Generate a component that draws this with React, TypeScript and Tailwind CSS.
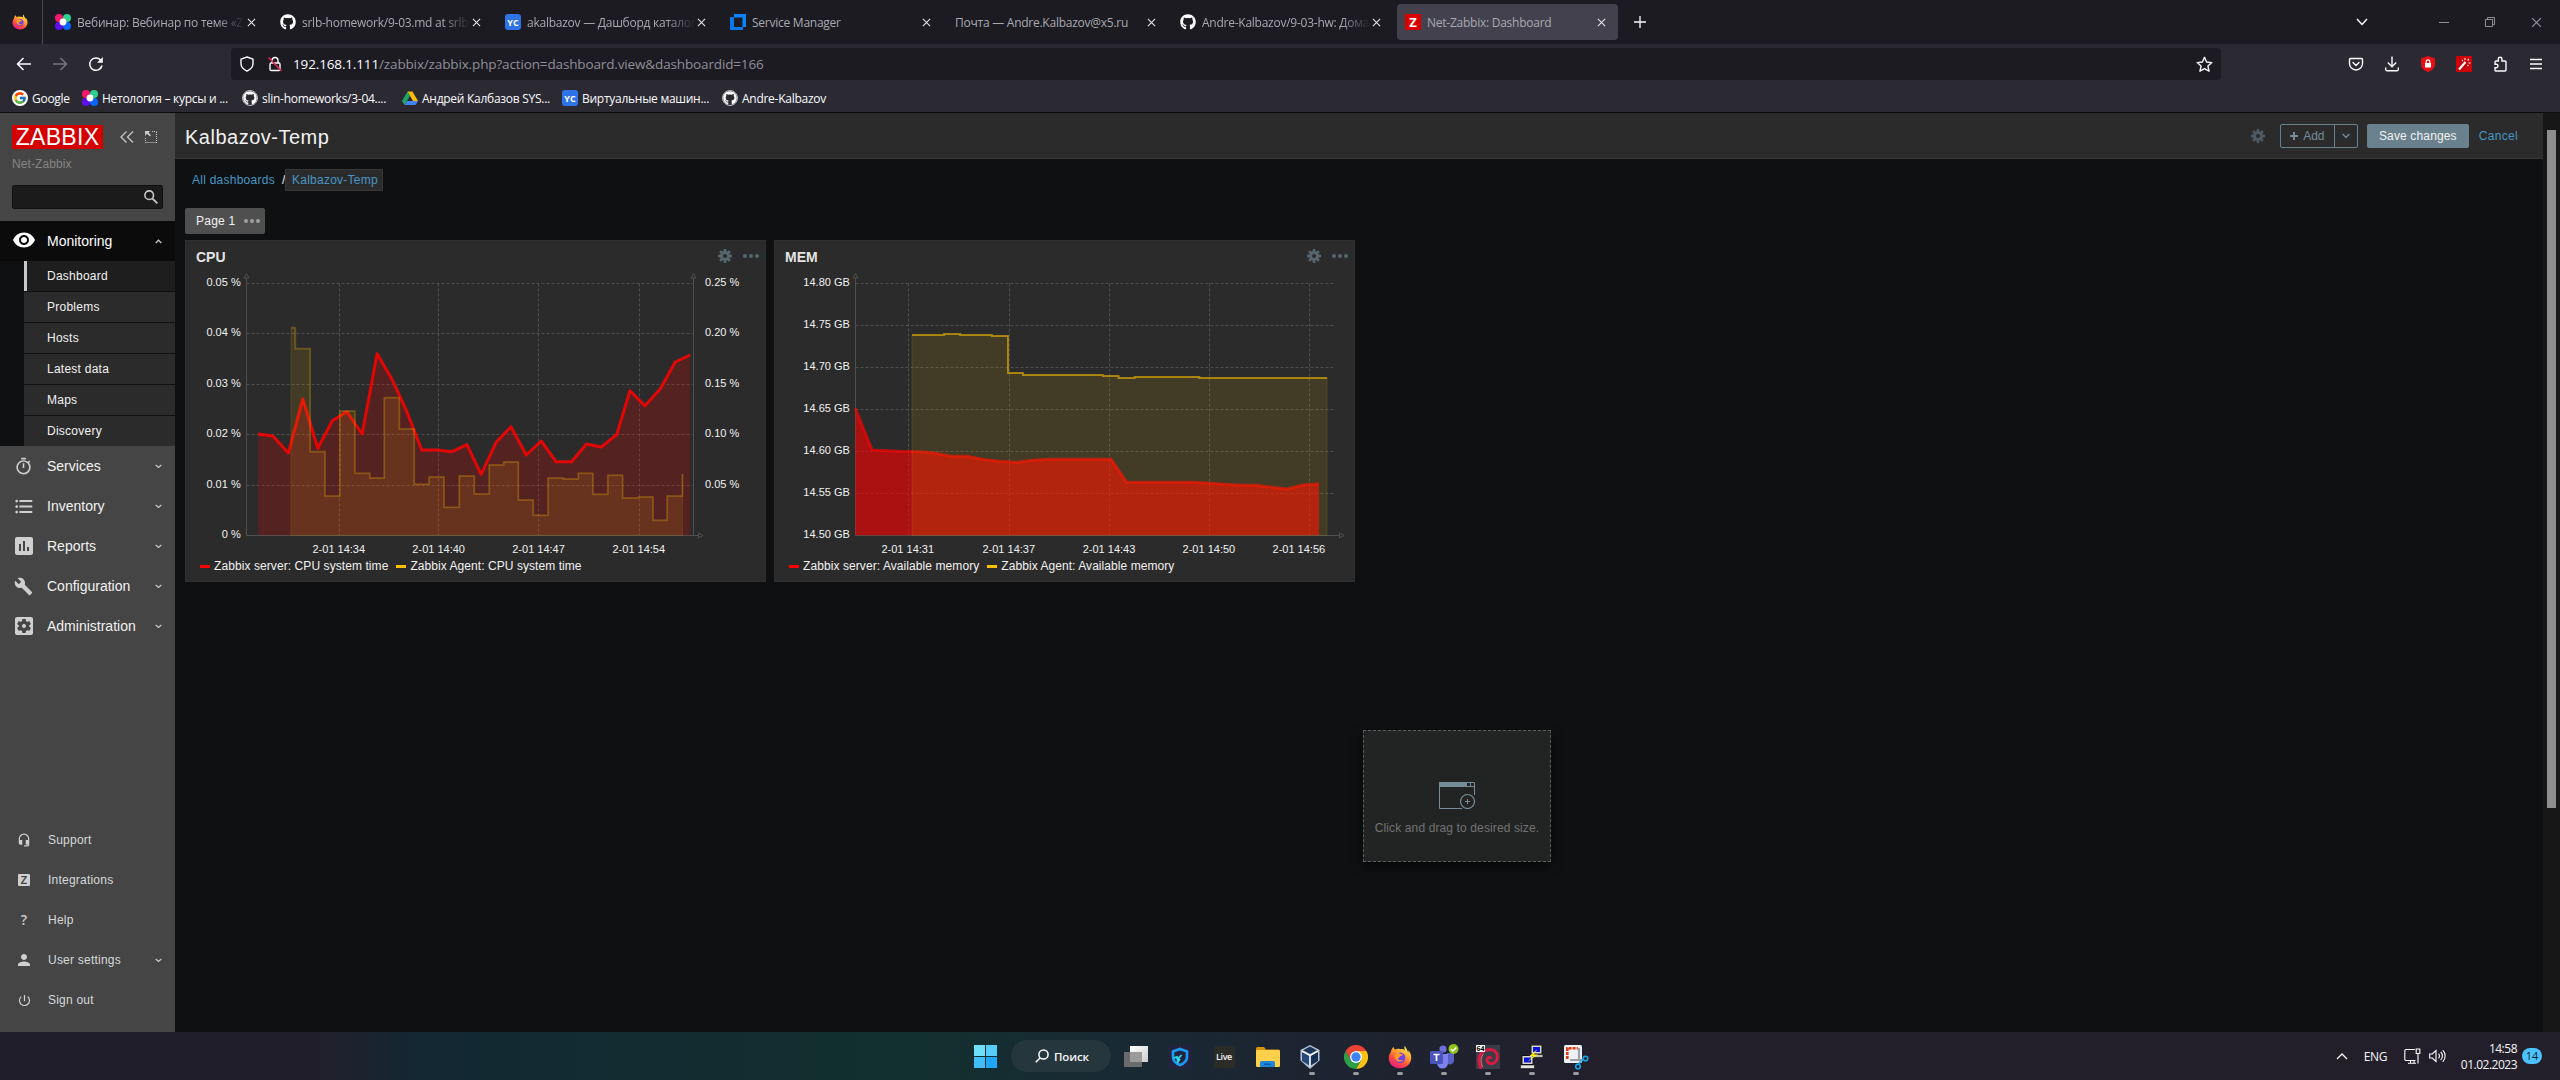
import React from "react";
import { FaGithub } from "react-icons/fa";
import { FcGoogle } from "react-icons/fc";
import {
  MdVisibility,
  MdFormatListBulleted,
  MdBuild,
  MdInsertChart,
  MdSettingsApplications,
  MdHeadsetMic,
  MdPerson,
  MdPowerSettingsNew,
  MdOutlineTimer,
} from "react-icons/md";

type P = { className?: string };

/* ---------- brand and browser glyphs ---------- */

const Firefox = ({ className }: P) => (
  <svg viewBox="0 0 32 32" className={className}>
    <defs>
      <linearGradient id="ffBody" x1="0.8" y1="0.05" x2="0.25" y2="1">
        <stop offset="0" stopColor="#fff44f" />
        <stop offset="0.35" stopColor="#ffa22e" />
        <stop offset="0.65" stopColor="#ff4f3c" />
        <stop offset="1" stopColor="#e31587" />
      </linearGradient>
    </defs>
    <path
      d="M22.5 1c-1 2.300-.8 4.200.5 6C21 5.500 18.500 5 16.500 5.500 14 4.600 11.500 4.800 9.500 6 8 5 7.500 3.500 7.600 2.200 5 4.500 4 7 4 9 2 11.500 1 14.500 1 17.500 1 25 7.500 31 16 31s15-6.200 15-14c0-4-1.500-7.500-4-10 .3 1.300.3 2.500 0 3.500C25.800 6.500 24 4 22.500 1z"
      fill="url(#ffBody)"
    />
    <circle cx="16.200" cy="17" r="7" fill="#7542e5" />
    <path
      d="M9.500 9.500c3-.8 5 .3 6.500 2 1.500.3 3 .6 4 .8-.4 1.700-2.500 1.900-3.800 2.700-1.400.8-.9 2.500-3.400 3 1.500 2.600 4.700 3 8 1.500-2.500 4-9.800 3.500-11.500-1.500-.8-2.800-.2-5.500 2-6.500-.8-.5-1.300-1.200-1.800-2z"
      fill="#ff9a2b"
    />
  </svg>
);

const Netology = ({ className }: P) => (
  <svg viewBox="0 0 16 16" className={className}>
    <circle cx="4" cy="4" r="4" fill="#f5186c" />
    <circle cx="12" cy="4" r="4" fill="#2fd08f" />
    <circle cx="4" cy="12" r="4" fill="#6010f0" />
    <circle cx="12" cy="12" r="4" fill="#0a66ff" />
    <circle cx="8" cy="8" r="3.400" fill="#fff" />
  </svg>
);

const YC = () => (
  <span className="flex h-4 w-4 shrink-0 items-center justify-center rounded-[3px] bg-[#2f73e8] font-['Open_Sans',sans-serif] text-[9px] leading-none font-bold text-white">
    YC
  </span>
);

const ServiceManager = () => (
  <svg viewBox="0 0 16 16" className="h-4 w-4 shrink-0">
    <path d="M0 3h11v13H0z" fill="#0068d6" />
    <path d="M4 0h12v13H4z" fill="#0a84ff" />
    <path d="M4 3.500h8.500V13H4z" fill="#1c1b22" />
    <path d="M0 3h4v10h9v3H0z" fill="#0a78ea" />
  </svg>
);

const ZBadge = () => (
  <span className="flex h-4 w-4 shrink-0 items-center justify-center bg-[#d90000] font-['Open_Sans',sans-serif] text-[13px] leading-none font-bold text-white">
    Z
  </span>
);

const Drive = () => (
  <svg viewBox="0 0 16 16" className="h-4 w-4 shrink-0">
    <path d="M5.500 1.500h5L16 11h-5z" fill="#fbbc04" />
    <path d="M5.500 1.500L0 11l2.500 4L8 5.700z" fill="#1fa463" />
    <path d="M5 11h11l-2.500 4h-11z" fill="#4285f4" />
  </svg>
);

const GithubDark = () => (
  <span className="flex h-4 w-4 shrink-0 items-center justify-center rounded-full border border-[#bdbdc3] bg-[#2b2a33]">
    <FaGithub className="h-3.5 w-3.5 text-white" />
  </span>
);

const Close = ({ className }: P) => (
  <svg viewBox="0 0 10 10" className={className}>
    <path d="M1 1l8 8M9 1L1 9" stroke="currentColor" strokeWidth="1.200" fill="none" />
  </svg>
);

/* ---------- browser ---------- */

const tabs = [
  { icon: <Netology className="h-4 w-4 shrink-0" />, title: "Вебинар: Вебинар по теме «Za", fade: true },
  { icon: <FaGithub className="h-4 w-4 shrink-0 text-white" />, title: "srlb-homework/9-03.md at srlb-", fade: true },
  { icon: <YC />, title: "akalbazov — Дашборд каталог", fade: true },
  { icon: <ServiceManager />, title: "Service Manager" },
  { icon: null, title: "Почта — Andre.Kalbazov@x5.ru" },
  { icon: <FaGithub className="h-4 w-4 shrink-0 text-white" />, title: "Andre-Kalbazov/9-03-hw: Дома", fade: true },
  { icon: <ZBadge />, title: "Net-Zabbix: Dashboard", active: true },
];

const TabStrip = () => (
  <div className="flex h-11 items-center bg-[#1c1b22]">
    <div className="flex h-11 w-[43px] items-center border-r border-[#4a4950] pl-3">
      <Firefox className="h-4 w-4" />
    </div>
    <div className="flex gap-1 pl-1">
      {tabs.map((t, i) => (
        <div
          key={i}
          className={`flex h-9 w-[221px] items-center rounded pr-3 pl-2 ${t.active ? "bg-[#42414d]" : ""}`}
        >
          {t.icon}
          <div
            className={`${t.icon ? "ml-1.5" : ""} mt-0.5 w-0 flex-1 text-[12px] tracking-[-0.25px] whitespace-nowrap text-[#a9a9b0] ${
              t.fade ? "[mask-image:linear-gradient(to_left,transparent,black_28px)]" : ""
            }`}
          >
            {t.title}
          </div>
          <Close className="ml-[2px] h-[9px] w-[9px] text-[#e4e4e8]" />
        </div>
      ))}
    </div>
    <svg viewBox="0 0 14 14" className="ml-[15px] h-[14px] w-[14px]">
      <path d="M7 1v12M1 7h12" stroke="#fbfbfe" strokeWidth="1.300" />
    </svg>
    <div className="ml-auto flex items-center pr-[18px] text-[#8f8f96]">
      <svg viewBox="0 0 12 8" className="mr-[71px] h-2 w-3">
        <path d="M1 1l5 5.500L11 1" fill="none" stroke="#fbfbfe" strokeWidth="1.400" />
      </svg>
      <div className="mr-9 h-px w-2.5 bg-[#8f8f96]" />
      <svg viewBox="0 0 10 10" className="mr-9 h-2.5 w-2.5">
        <path d="M.5 2.500h7v7h-7zM2.500 2.500v-2h7v7h-2" fill="none" stroke="currentColor" />
      </svg>
      <Close className="h-[11px] w-[11px]" />
    </div>
  </div>
);

const NavBar = () => (
  <div className="flex h-9 items-center bg-[#2b2a33] pt-1 text-[#fbfbfe]">
    <svg viewBox="0 0 16 16" className="ml-4 h-4 w-4">
      <path d="M15 8H1.500M7.500 2L1.500 8l6 6" fill="none" stroke="currentColor" strokeWidth="1.500" />
    </svg>
    <svg viewBox="0 0 16 16" className="ml-5 h-4 w-4 text-[#77767e]">
      <path d="M1 8h13.500M8.500 2l6 6-6 6" fill="none" stroke="currentColor" strokeWidth="1.500" />
    </svg>
    <svg viewBox="0 0 16 16" className="ml-5 h-4 w-4">
      <path d="M14 9.500A6.200 6.200 0 1 1 12.600 4" fill="none" stroke="currentColor" strokeWidth="1.500" />
      <path d="M14.800 1v5.800H9z" fill="currentColor" />
    </svg>
    <div className="ml-[127px] flex h-8 w-[1990px] items-center rounded bg-[#1c1b22] pr-2 pl-2">
      <svg viewBox="0 0 16 16" className="h-4 w-4">
        <path d="M8 1l6 2.200v4.300c0 3.500-2.500 6-6 7.600-3.500-1.600-6-4.100-6-7.600V3.200z" fill="none" stroke="currentColor" strokeWidth="1.400" strokeLinejoin="round" />
      </svg>
      <svg viewBox="0 0 16 16" className="ml-3 h-4 w-4">
        <rect x="3" y="7" width="10" height="7.500" rx="1.200" fill="none" stroke="currentColor" strokeWidth="1.400" />
        <path d="M5 7V4.500a3 3 0 0 1 6 0V7" fill="none" stroke="currentColor" strokeWidth="1.400" />
        <path d="M1.500 1.500l13 13.500" stroke="#e22850" strokeWidth="1.600" />
      </svg>
      <div className="mt-px ml-2.5 text-[13.5px] tracking-[-0.14px] text-[#908f98]">
        <span className="text-[#fbfbfe]">192.168.1.111</span>/zabbix/zabbix.php?action=dashboard.view&amp;dashboardid=166
      </div>
      <svg viewBox="0 0 16 16" className="ml-auto h-[17px] w-[17px]">
        <path d="M8 1.200l2 4.500 4.900.5-3.700 3.200 1.100 4.900L8 11.800l-4.300 2.500 1.100-4.900L1.100 6.200 6 5.700z" fill="none" stroke="currentColor" strokeWidth="1.300" strokeLinejoin="round" />
      </svg>
    </div>
    <div className="ml-auto flex items-center gap-5 pr-4">
      <svg viewBox="0 0 16 16" className="h-4 w-4">
        <path d="M2.600 2.500h10.800a1.100 1.100 0 0 1 1.100 1.100V7.500a6.500 6.500 0 0 1-13 0V3.600a1.100 1.100 0 0 1 1.100-1.100zM5 6.500l3 3 3-3" fill="none" stroke="currentColor" strokeWidth="1.400" strokeLinecap="round" />
      </svg>
      <svg viewBox="0 0 16 16" className="h-4 w-4">
        <path d="M8 .5v10M3.800 6.500L8 10.700l4.200-4.200M1.700 11.500v2a1.200 1.200 0 0 0 1.200 1.200h10.200a1.200 1.200 0 0 0 1.200-1.200v-2" fill="none" stroke="currentColor" strokeWidth="1.400" />
      </svg>
      <svg viewBox="0 0 16 16" className="h-4 w-4">
        <path d="M8 0l7 2.500v5.500c0 4-3 6.500-7 8-4-1.500-7-4-7-8V2.500z" fill="#e80f14" />
        <rect x="5" y="7" width="6" height="4.500" fill="#fff" />
        <path d="M6.200 7V5.600a1.800 1.800 0 0 1 3.600 0V7" fill="none" stroke="#fff" strokeWidth="1.200" />
      </svg>
      <svg viewBox="0 0 16 16" className="h-4 w-4">
        <rect width="16" height="16" fill="#cc0008" />
        <path d="M3 13.500L9.500 6" stroke="#fff" strokeWidth="2.200" />
        <path d="M9 2v2M13 3l-1.500 1.500M14.500 7h-2M12.500 10l-1-1M6 4l1 1" stroke="#fff" strokeWidth="1.100" />
      </svg>
      <svg viewBox="0 0 16 16" className="h-4 w-4">
        <path d="M6.300 5V3a1.800 1.800 0 0 1 3.600 0v2h2.900a1.200 1.200 0 0 1 1.200 1.200V14a1 1 0 0 1-1 1H4a1 1 0 0 1-1-1v-2.300h1.300a1.700 1.700 0 0 0 0-3.400H3V6.200A1.200 1.200 0 0 1 4.200 5z" fill="none" stroke="currentColor" strokeWidth="1.400" />
      </svg>
      <svg viewBox="0 0 16 16" className="h-4 w-4">
        <path d="M2 3.500h12M2 8h12M2 12.500h12" stroke="currentColor" strokeWidth="1.400" />
      </svg>
    </div>
  </div>
);

const bookmarks = [
  { icon: <span className="flex h-4 w-4 items-center justify-center rounded-full bg-white"><FcGoogle className="h-3.5 w-3.5" /></span>, label: "Google", w: "w-[70px]" },
  { icon: <Netology className="h-4 w-4 shrink-0" />, label: "Нетология – курсы и ...", w: "w-[160px]" },
  { icon: <GithubDark />, label: "slin-homeworks/3-04....", w: "w-[160px]" },
  { icon: <Drive />, label: "Андрей Калбазов SYS...", w: "w-[160px]" },
  { icon: <YC />, label: "Виртуальные машин...", w: "w-[160px]" },
  { icon: <GithubDark />, label: "Andre-Kalbazov", w: "w-[160px]" },
];

const BookmarkBar = () => (
  <div className="flex h-8 items-center bg-[#2b2a33] pt-1 pl-3">
    {bookmarks.map((b, i) => (
      <div key={i} className={`flex shrink-0 items-center gap-1 ${b.w}`}>
        {b.icon}
        <span className="mt-0.5 text-[12px] leading-4 tracking-[-0.27px] whitespace-nowrap text-[#fbfbfe]">{b.label}</span>
      </div>
    ))}
  </div>
);

/* ---------- sidebar ---------- */

const Chevron = ({ up }: { up?: boolean }) => (
  <svg viewBox="0 0 7 5" className="ml-auto h-[5px] w-[7px]">
    <path d={up ? "M.7 4L3.500 1.200 6.300 4" : "M.7 1L3.500 3.500 6.300 1"} fill="none" stroke="#c8c8c8" strokeWidth="1.300" />
  </svg>
);

const mainItems = [
  { icon: <MdOutlineTimer className="h-[19px] w-[19px]" />, label: "Services" },
  { icon: <MdFormatListBulleted className="h-[23px] w-[22px]" />, label: "Inventory" },
  { icon: <MdInsertChart className="h-6 w-6" />, label: "Reports" },
  { icon: <MdBuild className="h-[19px] w-[19px]" />, label: "Configuration" },
  { icon: <MdSettingsApplications className="h-6 w-6" />, label: "Administration" },
];

const footItems = [
  { icon: <MdHeadsetMic className="h-[14px] w-[14px]" />, label: "Support" },
  { icon: <span className="flex h-3 w-3 items-center justify-center rounded-[1px] bg-[#cfcfcf] text-[11px] leading-none font-bold text-[#454545]">Z</span>, label: "Integrations" },
  { icon: <span className="font-['Open_Sans',sans-serif] text-[14px] leading-none font-semibold">?</span>, label: "Help" },
  { icon: <MdPerson className="h-[18px] w-[18px]" />, label: "User settings", more: true },
  { icon: <MdPowerSettingsNew className="h-[15px] w-[15px]" />, label: "Sign out" },
];

const Sidebar = () => (
  <aside className="flex h-full w-[175px] shrink-0 flex-col bg-[#454545]">
    <div className="h-[108px] shrink-0 px-3 pt-3">
      <div className="flex items-center">
        <div className="flex h-6 w-[91px] items-center justify-center bg-[#d40000] text-[23px] leading-6 tracking-[0.3px] text-white">
          ZABBIX
        </div>
        <svg viewBox="0 0 14 12" className="ml-[17px] h-3 w-[14px]">
          <path d="M6.500.5L1 6l5.500 5.500M13 .5L7.500 6l5.500 5.500" fill="none" stroke="#c0c0c0" strokeWidth="1.400" />
        </svg>
        <svg viewBox="0 0 12 12" className="ml-[11px] h-3 w-3">
          <path d="M7 .5h4.500M11.500 1v11M.5 11.500h11M.5 7v4.500" fill="none" stroke="#cfcfcf" strokeWidth="1" strokeDasharray="1 1" />
          <path d="M0 0h5L3.500 1.500l2.500 2.700-1.200 1L2 2.800.3 5z" fill="#cfcfcf" />
        </svg>
      </div>
      <div className="mt-[7px] text-[12px] leading-[16px] tracking-[0.1px] text-[#868686]">Net-Zabbix</div>
      <div className="mt-[13px] flex h-6 w-[151px] items-center justify-end rounded-[2px] border border-[#0e1012] bg-[#1b1b1b] pr-1">
        <svg viewBox="0 0 14 14" className="h-[14px] w-[14px]">
          <circle cx="5.200" cy="5.200" r="4.300" fill="none" stroke="#c8c8c8" strokeWidth="1.600" />
          <path d="M8.300 8.300L13.300 13.300" stroke="#c8c8c8" strokeWidth="1.900" />
        </svg>
      </div>
    </div>
    <div className="flex h-10 shrink-0 items-center bg-[#0b0b0b] pr-[13px] text-[14px] text-white">
      <span className="flex w-12 justify-center">
        <MdVisibility className="mb-[2px] h-6 w-6" />
      </span>
      <span className="-ml-px">Monitoring</span>
      <Chevron up />
    </div>
    <div className="flex shrink-0 flex-col gap-px bg-[#0e1012] pl-6">
      {["Dashboard", "Problems", "Hosts", "Latest data", "Maps", "Discovery"].map((s, i) => (
        <div
          key={s}
          className={`flex h-[30px] items-center text-[12px] tracking-[0.25px] text-[#f2f2f2] ${
            i === 0 ? "border-l-[3px] border-[#c8c8c8] bg-[#1e1e1e] pl-5" : "bg-[#2b2b2b] pl-[23px]"
          }`}
        >
          {s}
        </div>
      ))}
    </div>
    {mainItems.map((m) => (
      <div key={m.label} className="flex h-10 shrink-0 items-center pr-[13px] text-[14px] text-[#f2f2f2]">
        <span className="flex w-[47px] justify-center text-[#cfcfcf]">{m.icon}</span>
        {m.label}
        <Chevron />
      </div>
    ))}
    <div className="mt-auto pb-3">
      {footItems.map((m) => (
        <div key={m.label} className="flex h-10 items-center pr-[13px] text-[12px] tracking-[0.22px] text-[#d6d9da]">
          <span className="flex w-12 justify-center text-[#cfcfcf]">{m.icon}</span>
          {m.label}
          {m.more && <Chevron />}
        </div>
      ))}
    </div>
  </aside>
);

/* ---------- dashboard ---------- */

const Gear = ({ className }: P) => (
  <svg viewBox="0 0 14 14" className={className}>
    <circle cx="7" cy="7" r="3.600" fill="none" stroke="currentColor" strokeWidth="3" />
    {[0, 45, 90, 135, 180, 225, 270, 315].map((a) => (
      <rect key={a} x="5.700" y="0" width="2.600" height="2.800" fill="currentColor" transform={`rotate(${a} 7 7)`} />
    ))}
  </svg>
);

const Dots = ({ className }: P) => (
  <svg viewBox="0 0 16 4" className={className}>
    <circle cx="2" cy="2" r="2" fill="currentColor" />
    <circle cx="8" cy="2" r="2" fill="currentColor" />
    <circle cx="14" cy="2" r="2" fill="currentColor" />
  </svg>
);

type Pt = [number, number];

/* Series are sampled on a 1568 x 1080 grid that covers the 600 x 360 plot canvas. */
const KX = 600 / 1568;
const KY = 1 / 3;
const toPoints = (pts: Pt[]) => pts.map(([x, y]) => `${(x * KX).toFixed(1)},${(y * KY).toFixed(1)}`).join(" ");

/* Expands [x, level] pairs into a staircase that ends at endX. */
const stairs = (s: Pt[], endX: number): Pt[] =>
  s.flatMap(([x, y], i) => [[x, y] as Pt, [i + 1 < s.length ? s[i + 1][0] : endX, y] as Pt]);

const cpuServer: Pt[] = [
  [204, 612], [243, 618], [283, 669], [321, 507], [360, 655], [398, 572], [436, 545], [476, 612], [515, 371], [555, 450],
  [593, 545], [632, 660], [672, 660], [711, 665], [750, 644], [787, 733], [827, 635], [865, 590], [905, 675], [944, 633],
  [983, 695], [1023, 695], [1062, 642], [1101, 651], [1141, 614], [1176, 482], [1215, 527], [1255, 477], [1294, 396], [1333, 375],
];
const cpuAgent: Pt[] = [
  ...stairs(
    [
      [290, 293], [301, 356], [340, 665], [379, 798], [418, 543], [457, 730], [496, 744], [534, 503], [573, 597], [612, 763],
      [651, 741], [690, 832], [730, 738], [769, 792], [808, 705], [846, 696], [884, 810], [923, 856], [962, 744], [1002, 747],
      [1041, 730], [1079, 793], [1118, 736], [1157, 804], [1198, 801], [1236, 871], [1273, 798],
    ],
    1313
  ),
  [1313, 732],
];
const memServer: Pt[] = [
  [223, 535], [267, 660], [340, 664], [390, 665], [430, 669], [470, 678], [515, 679], [555, 688], [600, 694], [645, 697],
  [685, 691], [725, 688], [892, 688], [932, 757], [1110, 757], [1230, 766], [1270, 766], [1352, 777], [1392, 765], [1435, 761],
];
const memAgent: Pt[] = stairs(
  [[371, 315], [455, 312], [497, 315], [580, 318], [622, 429], [661, 435], [870, 438], [911, 444], [953, 441], [1122, 444]],
  1456
);

type ChartProps = {
  offset: string;
  left: number;
  right: number;
  grid: number;
  yLabels: [string, number][];
  yRight?: [string, number][];
  xLabels: [string, number, number][];
  server: Pt[];
  agent: Pt[];
  serverFill: string;
  serverLine: string;
  agentLine: string;
};

const BASE = 916;

const area = (pts: Pt[]): Pt[] => [[pts[0][0], BASE], ...pts, [pts[pts.length - 1][0], BASE]];

const Chart = (c: ChartProps) => {
  const lx = Math.round(c.left * KX) + 0.5;
  const rx = Math.round(c.right * KX) + 0.5;
  return (
    <svg viewBox="0 41 600 280" className={`block h-[280px] w-[600px] ${c.offset}`}>
      <g stroke="#4f4f4f" strokeDasharray="3 2" fill="none">
        {c.yLabels.slice(0, -1).map(([t, y]) => (
          <line key={t} x1={lx} x2={c.grid * KX} y1={Math.round(y * KY) + 0.5} y2={Math.round(y * KY) + 0.5} />
        ))}
        {c.xLabels.map(([t, x]) => (
          <line key={t} x1={Math.round(x * KX) - 0.5} x2={Math.round(x * KX) - 0.5} y1="53.500" y2="305" />
        ))}
      </g>
      <g stroke="#4f4f4f" fill="none">
        <path d={`M${lx} 305.500V48M${lx - 2.5} 48l2.500 -4.500l2.500 4.500z`} />
        {c.yRight && <path d={`M${rx} 305.500V48M${rx - 2.5} 48l2.500 -4.500l2.500 4.500z`} />}
        <path d={`M${lx} 305.500H${rx + 5}M${rx + 5} 303l4.500 2.500l-4.500 2.500z`} />
      </g>
      <polygon points={toPoints(area(c.server))} className={c.serverFill} />
      <polyline points={toPoints(c.server)} fill="none" strokeWidth="3" strokeLinejoin="round" className={c.serverLine} />
      <polygon points={toPoints(area(c.agent))} fill="#ffbf00" fillOpacity="0.11" stroke="#ffbf00" strokeOpacity="0.13" />
      <polyline points={toPoints(c.agent)} fill="none" strokeWidth="2" className={c.agentLine} />
      <g fill="#f2f2f2" fontSize="11">
        {c.yLabels.map(([t, y]) => (
          <text key={t} x={c.left * KX - 5.5} y={y * KY + 3} textAnchor="end">
            {t}
          </text>
        ))}
        {c.yRight?.map(([t, y]) => (
          <text key={t} x={1372 * KX} y={y * KY + 3}>
            {t}
          </text>
        ))}
        {c.xLabels.map(([t, , x]) => (
          <text key={t} x={x * KX} y="323" textAnchor="middle">
            {t}
          </text>
        ))}
      </g>
    </svg>
  );
};

const Widget = ({ title, legend, children }: { title: string; legend: [string, string]; children: React.ReactNode }) => (
  <section className="relative h-[342px] w-[581px] overflow-hidden border border-[#303030] bg-[#2b2b2b]">
    <div className="flex h-[30px] items-center pr-1.5 pb-px pl-2.5 text-[#57656d]">
      <h2 className="mt-1 text-[14px] font-bold text-[#e4e4e4]">{title}</h2>
      <Gear className="ml-auto h-[14px] w-[14px]" />
      <Dots className="ml-[11px] h-1 w-4" />
    </div>
    <div className="h-[287px] [&>svg]:overflow-visible">{children}</div>
    <div className="flex h-4 items-center pl-[14px] text-[12px] text-[#f2f2f2]">
      <span className="mr-1 h-[3px] w-2.5 bg-[#ff0000]" />
      <span className="mr-2 tracking-[0.08px]">{legend[0]}</span>
      <span className="mr-1 h-[3px] w-2.5 bg-[#ffbf00]" />
      <span className="tracking-[0.06px]">{legend[1]}</span>
    </div>
  </section>
);

const Dashboard = () => (
  <main className="flex min-w-0 flex-1 flex-col bg-[#0e1012]">
    <header className="flex h-[46px] shrink-0 items-center border-b border-[#383838] bg-[#2b2b2b] pr-[25px] pl-2.5">
      <h1 className="mt-[2px] text-[20px] tracking-[0.5px] text-[#f2f2f2]">Kalbazov-Temp</h1>
      <div className="ml-auto flex h-6 items-center text-[12px]">
        <Gear className="mr-[15px] h-[14px] w-[14px] text-[#4d5a61]" />
        <div className="flex h-6 w-[78px] rounded-[2px] border border-[#69808d] text-[#768d99]">
          <div className="flex w-[54px] items-center justify-center gap-[5px] border-r border-[#69808d]">
            <svg viewBox="0 0 8 8" className="h-2 w-2">
              <path d="M4 0v8M0 4h8" stroke="currentColor" strokeWidth="2" />
            </svg>
            Add
          </div>
          <div className="flex flex-1 items-center justify-center">
            <svg viewBox="0 0 8 6" className="h-1.5 w-2">
              <path d="M.7 1L4 4.500 7.300 1" fill="none" stroke="currentColor" strokeWidth="1.300" />
            </svg>
          </div>
        </div>
        <div className="ml-[9px] flex h-6 w-[102px] items-center justify-center rounded-[2px] bg-[#69808d] tracking-[0.15px] text-[#f2f2f2]">Save changes</div>
        <div className="ml-2.5 tracking-[0.3px] text-[#4796c4]">Cancel</div>
      </div>
    </header>
    <div className="mt-[9px] flex h-6 shrink-0 items-center pl-[17px] text-[12px] text-[#4796c4]">
      <span className="w-[83px] tracking-[0.25px] whitespace-nowrap">All dashboards</span>
      <span className="ml-[7px] w-[3px] text-[#f2f2f2]">/</span>
      <span className="flex h-[22px] w-[98px] items-center border border-[#383838] bg-[#2b2b2b] pl-1.5 tracking-[0.25px] whitespace-nowrap">Kalbazov-Temp</span>
    </div>
    <div className="mt-4 ml-2.5 flex h-[26px] w-20 shrink-0 items-center rounded-[2px] bg-[#4f4f4f] pl-[11px] text-[12px] tracking-[0.25px] text-[#f2f2f2]">
      Page 1
      <Dots className="ml-2 h-1 w-4 text-[#a0a0a0]" />
    </div>
    <div className="mt-1.5 ml-2.5 flex gap-2">
      <Widget title="CPU" legend={["Zabbix server: CPU system time", "Zabbix Agent: CPU system time"]}>
        <Chart
          offset="-ml-[6px]"
          left={173}
          right={1340}
          grid={1340}
          yLabels={[["0.05 %", 160], ["0.04 %", 310], ["0.03 %", 463], ["0.02 %", 613], ["0.01 %", 766], ["0 %", 916]]}
          yRight={[["0.25 %", 160], ["0.20 %", 310], ["0.15 %", 463], ["0.10 %", 613], ["0.05 %", 766]]}
          xLabels={[["2-01 14:34", 417, 415], ["2-01 14:40", 678, 676], ["2-01 14:47", 939, 937], ["2-01 14:54", 1201, 1199]]}
          server={cpuServer}
          agent={cpuAgent}
          serverFill="fill-[#ff0000]/20"
          serverLine="stroke-[#ff0000]/85"
          agentLine="stroke-[#ffbf00]/20"
        />
      </Widget>
      <Widget title="MEM" legend={["Zabbix server: Available memory", "Zabbix Agent: Available memory"]}>
        <Chart
          offset="-ml-[5px]"
          left={223}
          right={1473}
          grid={1473}
          yLabels={[["14.80 GB", 160], ["14.75 GB", 286], ["14.70 GB", 412], ["14.65 GB", 538], ["14.60 GB", 664], ["14.55 GB", 790], ["14.50 GB", 916]]}
          xLabels={[["2-01 14:31", 362, 360], ["2-01 14:37", 626, 624], ["2-01 14:43", 888, 886], ["2-01 14:50", 1149, 1147], ["2-01 14:56", 1410, 1382]]}
          server={memServer}
          agent={memAgent}
          serverFill="fill-[#ff0000]/60"
          serverLine="stroke-[#ff0000]/60"
          agentLine="stroke-[#ffbf00]/55"
        />
      </Widget>
    </div>
    <div className="mt-[148px] ml-[1188px] flex h-[132px] w-[188px] flex-col items-center border border-dashed border-[#5a5d5d] bg-[#222424] pt-[51px] text-[12px] text-[#737373] shadow-[0_4px_10px_rgba(0,0,0,0.6)]">
      <svg viewBox="0 0 36 27" className="h-[27px] w-9 shrink-0 text-[#768d99]">
        <path d="M.5.500h35V13M23 26.500H.5V.5" fill="none" stroke="currentColor" />
        <rect width="28" height="5" fill="currentColor" />
        <path d="M28 4.500h8M31.500 0v5" stroke="currentColor" />
        <circle cx="28.500" cy="19.500" r="7" fill="none" stroke="currentColor" strokeWidth="1.200" />
        <path d="M28.500 17v5M26 19.500h5" stroke="currentColor" />
      </svg>
      <span className="mt-2.5 tracking-[0.12px] whitespace-nowrap">Click and drag to desired size.</span>
    </div>
  </main>
);

/* ---------- taskbar ---------- */

const TaskView = () => (
  <svg viewBox="0 0 24 24" className="h-6 w-6">
    <defs>
      <linearGradient id="tv" x1="0" y1="0" x2="1" y2="1">
        <stop offset="0" stopColor="#fff" />
        <stop offset="1" stopColor="#cfcfcf" />
      </linearGradient>
    </defs>
    <rect x="0" y="7" width="18" height="15" fill="#6b6b6b" />
    <rect x="6" y="1" width="18" height="16" fill="url(#tv)" />
    <rect x="6" y="7" width="12" height="10" fill="#9b9b9b" />
  </svg>
);

const ShieldApp = () => (
  <svg viewBox="0 0 24 24" className="h-6 w-6">
    <rect width="24" height="24" rx="2" fill="#24233f" />
    <path d="M12 4l7 2.500v5.500c0 4-3 6.500-7 8-4-1.500-7-4-7-8V6.500z" fill="none" stroke="#1a9cf5" strokeWidth="2.600" />
    <path d="M5.500 13l3.500-1 .5 2.500 4-4.500M9 18l3-4" fill="none" stroke="#26e0e8" strokeWidth="1.800" />
  </svg>
);

const Folder = () => (
  <svg viewBox="0 0 24 24" className="h-6 w-6">
    <path d="M0 3.500A1.500 1.500 0 0 1 1.500 2h6.500l2 2.500h12.500A1.500 1.500 0 0 1 24 6v5H0z" fill="#d99310" />
    <rect x="0" y="5" width="24" height="17" rx="1.200" fill="#ffd04a" />
    <path d="M4 22v-4.500A1.500 1.500 0 0 1 5.500 16h12a1.500 1.500 0 0 1 1.500 1.500V22z" fill="#1f86d8" />
    <rect x="8" y="18.500" width="7" height="1.500" fill="#0b5ea8" />
  </svg>
);

const VBox = () => (
  <svg viewBox="0 0 24 24" className="mr-1 h-6 w-6">
    <path d="M12 0l9.500 5v10.500L12 24l-9.500-8.500V5z" fill="#b9c6d6" />
    <path d="M12 1.500L19 5.300 12 9 5 5.300z" fill="#1c3558" />
    <path d="M4 6.800l7.200 3.900v9.700l-7.200-4.400z" fill="#25497b" />
    <path d="M20 6.800l-7.200 3.900v9.700l7.200-4.400z" fill="#16304f" />
    <path d="M4 6.300l8 4.300 8-4.300M12 10.600V21" stroke="#fff" strokeWidth="1.200" fill="none" />
  </svg>
);

const Chrome = () => (
  <svg viewBox="0 0 24 24" className="h-6 w-6">
    <path d="M12 6h10.400A12 12 0 0 1 12 24l5.200-9z" fill="#fbc116" />
    <path d="M17.200 15L12 24A12 12 0 0 1 1.600 6l5.200 9z" fill="#2f9e48" />
    <path d="M1.600 6A12 12 0 0 1 22.400 6H12a6 6 0 0 0-5.200 9z" fill="#ea4335" />
    <circle cx="12" cy="12" r="6" fill="#fff" />
    <circle cx="12" cy="12" r="4.700" fill="#3f83f2" />
  </svg>
);

const Teams = () => (
  <svg viewBox="0 0 30 26" className="h-[26px] w-[30px]">
    <circle cx="14" cy="5" r="3.600" fill="#6a70d6" />
    <path d="M18 9h7v8a4 4 0 0 1-7 2z" fill="#5a61c6" />
    <path d="M8 10h11v9a5.500 5.500 0 0 1-11 0z" fill="#7b83eb" />
    <rect x="1" y="7" width="13" height="13" rx="1.200" fill="#4b53bc" />
    <path d="M4.500 10.500h6M7.500 10.500v6.500" stroke="#fff" strokeWidth="1.700" />
    <circle cx="24.500" cy="5" r="5" fill="#8fc31c" />
    <path d="M21.800 5l2 2 3.500-3.500" fill="none" stroke="#fff" strokeWidth="1.500" />
  </svg>
);

const Debian = () => (
  <div className="relative flex h-6 w-6 items-center justify-center bg-[#3b3d46]">
    <svg viewBox="0 0 24 24" className="h-6 w-6">
      <path d="M5 24C2 17 2 11 6 7.500c4-4 12-4 14.500.5 2 4 .5 9.500-4 10.500-4 .8-6.500-2.500-5-5 1-1.800 3.300-1.500 3.500 0" fill="none" stroke="#e0173f" strokeWidth="2.800" />
      <path d="M6.500 22C4.500 17 4.500 12 7.500 9" fill="none" stroke="#ff8ea0" strokeWidth="0.800" />
    </svg>
    <span className="absolute top-0 left-0 flex h-[7px] w-[9px] items-center justify-center bg-white text-[7px] leading-none font-bold text-black">64</span>
  </div>
);

const Putty = () => (
  <svg viewBox="0 0 24 24" className="h-6 w-6">
    <path d="M11 0h11v9H11z" fill="#d8d8d0" stroke="#111" />
    <rect x="13" y="2" width="7" height="5" fill="#0a12d8" />
    <path d="M11 9.500h12v3H11z" fill="#bdbdb6" stroke="#111" strokeWidth=".6" />
    <path d="M2 10.500h11v9H2z" fill="#d8d8d0" stroke="#111" />
    <rect x="4" y="12.500" width="7" height="5" fill="#0a12d8" />
    <path d="M.5 20h14v3.500H.5z" fill="#e6e6df" stroke="#111" strokeWidth=".6" />
    <path d="M17.500 4l-8 7h4l-6.500 6 11-7.500h-4.500z" fill="#ffee10" />
  </svg>
);

const Snip = () => (
  <svg viewBox="0 0 24 24" className="h-6 w-6 overflow-visible">
    <rect x="0" y="0" width="18" height="18" rx="1.500" fill="#eef1f5" />
    <path d="M3.300 14V3.300h10.500" fill="none" stroke="#e03a10" strokeWidth="2.600" strokeDasharray="3 1" />
    <path d="M15 3v12.500M6 15h13" stroke="#9aa0aa" strokeWidth="2.200" />
    <circle cx="21.500" cy="13.500" r="2.300" fill="none" stroke="#1ba4e8" strokeWidth="1.600" />
    <circle cx="14" cy="21.500" r="2.300" fill="none" stroke="#1ba4e8" strokeWidth="1.600" />
    <path d="M14.500 19l2-2.500M19.500 14.500l-3 1.500" stroke="#1ba4e8" strokeWidth="1.600" />
  </svg>
);

const apps: { icon: React.ReactNode; open?: boolean }[] = [
  { icon: <TaskView /> },
  { icon: <ShieldApp /> },
  { icon: <span className="flex h-[22px] w-[21px] items-center justify-center bg-[#2b2b28] text-[9px] font-semibold tracking-[-0.4px] text-[#f2f2f2]">Live</span> },
  { icon: <Folder /> },
  { icon: <VBox />, open: true },
  { icon: <Chrome />, open: true },
  { icon: <Firefox className="h-6 w-6" />, open: true },
  { icon: <Teams />, open: true },
  { icon: <Debian />, open: true },
  { icon: <Putty />, open: true },
  { icon: <Snip />, open: true },
];

const Taskbar = () => (
  <div className="flex h-12 items-center bg-[linear-gradient(to_right,#211e2b_0,#211e2b_320px,#132833_420px,#12302f_900px,#182a33_1100px,#1d2431_1320px,#221f2b_1600px)] font-['Open_Sans','Noto_Sans',sans-serif] text-[#f5f5f7]">
    <div className="ml-[974px] grid h-[23px] w-[23px] grid-cols-2 gap-px">
      <span className="bg-[#6fe0fb]" />
      <span className="bg-[#54cdfa]" />
      <span className="bg-[#3fbef9]" />
      <span className="bg-[#1fa6f7]" />
    </div>
    <div className="ml-[14px] flex h-8 w-[100px] items-center rounded-full bg-[#25363c] pl-6">
      <svg viewBox="0 0 14 14" className="h-[14px] w-[14px]">
        <circle cx="8.500" cy="5.500" r="4.600" fill="none" stroke="#fff" strokeWidth="1.500" />
        <path d="M5 9L.8 13.200" stroke="#fff" strokeWidth="1.600" />
      </svg>
      <span className="mt-0.5 ml-[5px] text-[11.5px] font-semibold tracking-[-0.1px]">Поиск</span>
    </div>
    <div className="ml-[3px] flex">
      {apps.map((a, i) => (
        <div key={i} className="flex h-12 w-11 flex-col items-center">
          <div className="flex h-10 items-end justify-center">
            <div className="mb-[3px] flex h-6 items-center">{a.icon}</div>
          </div>
          {a.open && <span className="h-[3px] w-1.5 rounded-full bg-[#9a9a9f]" />}
        </div>
      ))}
    </div>
    <div className="ml-auto flex items-center pr-[18px] text-[12px]">
      <svg viewBox="0 0 12 7" className="h-[7px] w-3">
        <path d="M1 6l5-5 5 5" fill="none" stroke="#fff" strokeWidth="1.300" />
      </svg>
      <span className="mt-0.5 ml-4 tracking-[-0.4px]">ENG</span>
      <svg viewBox="0 0 17 16" className="ml-[17px] h-4 w-[17px]">
        <path d="M11 1.500H2A1.200 1.200 0 0 0 .8 2.700v8.600A1.200 1.200 0 0 0 2 12.500h9.500M4 15.200h8M6.500 12.500v2.500M10 12.500v2.500M12.200 1h3.600v4.500h-3.600zM14 5.500v10" fill="none" stroke="#fff" strokeWidth="1.100" />
      </svg>
      <svg viewBox="0 0 17 14" className="ml-2 h-[14px] w-[17px]">
        <path d="M.7 5h2.600L7 1.500v11L3.300 9H.7zM9.500 4.700a3.200 3.200 0 0 1 0 4.600M11.700 2.900a5.800 5.800 0 0 1 0 8.200M13.800 1.200a8.400 8.400 0 0 1 0 11.600" fill="none" stroke="#fff" strokeWidth="1.100" />
      </svg>
      <div className="mt-px ml-[10px] w-[61px] text-right leading-4 tracking-[-0.5px] whitespace-nowrap">
        <div>14:58</div>
        <div>01.02.2023</div>
      </div>
      <span className="ml-[5px] flex h-4 w-5 items-center justify-center rounded-full bg-[#4cc2ff] text-[11px] text-[#10202b]">14</span>
    </div>
  </div>
);

export default function App() {
  return (
    <div className="flex h-[1080px] w-[2560px] flex-col overflow-hidden bg-[#0e1012] font-['Liberation_Sans',Arial,sans-serif]">
      <div className="shrink-0 border-b border-[#0c0c0d] font-['Open_Sans','Noto_Sans',sans-serif]">
        <TabStrip />
        <NavBar />
        <BookmarkBar />
      </div>
      <div className="flex h-[919px] shrink-0">
        <Sidebar />
        <Dashboard />
        <div className="w-[17px] shrink-0 bg-[#171717] pt-[17px]">
          <div className="ml-1 h-[678px] w-[9px] bg-[#8e8e8e]" />
        </div>
      </div>
      <Taskbar />
    </div>
  );
}
